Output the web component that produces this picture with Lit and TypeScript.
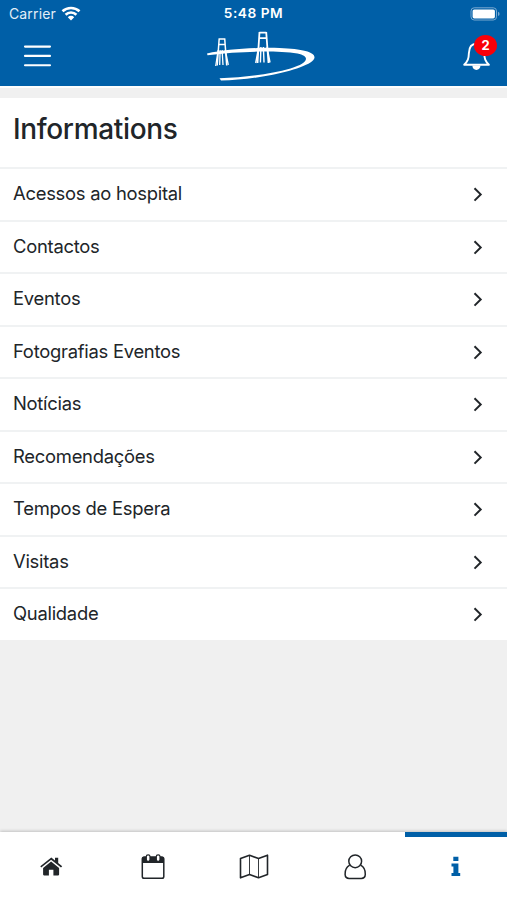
import { LitElement, html, css, svg } from "lit";
import { customElement } from "lit/decorators.js";
import { classMap } from "lit/directives/class-map.js";

const rows = [
  "Acessos ao hospital",
  "Contactos",
  "Eventos",
  "Fotografias Eventos",
  "Notícias",
  "Recomendações",
  "Tempos de Espera",
  "Visitas",
  "Qualidade",
];

const tabs = [
  {
    name: "Home",
    icon: svg`<path fill="currentColor" d="M9.3 12.2 20.3 3.5 24 6.5V3.8h3.2v5.3l4 3.1-1.2 1.4-9.9-7.8-9.9 7.8z"/><path fill="currentColor" d="m12.1 13.9 8-6.3 8 6.3v6.7q0 .8-.8.8h-4.900v-5.700h-4.500v5.700H13q-.9 0-.9-.8z"/>`,
  },
  {
    name: "Calendar",
    icon: svg`<rect x="9.300" y="3.200" width="21.500" height="21" rx="1.800" fill="none" stroke="currentColor" stroke-width="1.500"/><path fill="currentColor" d="M9 9.100V4.300Q9 2.500 11 2.500H29q2 0 2 1.800v4.800z"/><rect x="13.300" y=".8" width="3.700" height="6.500" rx="1.800" fill="#fff" stroke="currentColor" stroke-width="1.200"/><rect x="23.300" y=".8" width="3.700" height="6.500" rx="1.800" fill="#fff" stroke="currentColor" stroke-width="1.200"/>`,
  },
  {
    name: "Map",
    icon: svg`<path fill="none" stroke="currentColor" stroke-width="1.600" stroke-linejoin="round" d="m6.500 4.600 9-3.400 9 3.400 9-3.400v19.200l-9 3.400-9-3.400-9 3.400z"/><path fill="none" stroke="currentColor" stroke-width=".9" d="M15.500 1.200v19.200m9-15.800v19.200"/>`,
  },
  {
    name: "Profile",
    icon: svg`<circle cx="20.200" cy="7.300" r="6.400" fill="none" stroke="currentColor" stroke-width="1.500"/><path fill="none" stroke="currentColor" stroke-width="1.500" d="M14.700 11.200c-3.200 1.800-4.800 5.200-4.600 9.200q.2 4 4 4h12.200q3.800 0 4-4c.2-4-1.400-7.400-4.600-9.200"/>`,
  },
  {
    name: "Informations",
    icon: svg`<path fill="currentColor" d="M17.300 2.800h5.100V7h-5.100zM15.500 9.400h6.900v9.500h1.800v3.200h-8.700v-3.200h1.900v-6.300h-1.900z"/>`,
  },
];

@customElement("app-root")
export class AppRoot extends LitElement {
  static styles = css`
    :host {
      display: flex;
      flex-direction: column;
      height: 900px;
      overflow: hidden;
      background: #f0f0f0;
      color: #212529;
      font-family: Inter, "Liberation Sans", sans-serif;
    }
    svg { display: block; }
    .header {
      flex: none;
      height: 86px;
      background: #005fa7;
      color: #fff;
      border-bottom: 2px solid #fdfdfd;
    }
    .status {
      display: grid;
      grid-template-columns: 1fr 62px 1fr;
      align-items: center;
      height: 27px;
      padding: 0 7px;
      font-size: 14px;
      line-height: 27px;
    }
    .carrier { display: flex; align-items: center; gap: 5px; padding-left: 2px; letter-spacing: .14px; color: #e3eef7; }
    .time { font-size: 13.7px; font-weight: 600; letter-spacing: .5px; text-align: center; white-space: nowrap; }
    .battery { justify-self: end; }
    .nav {
      display: grid;
      grid-template-columns: 1fr 120px 1fr;
      height: 59px;
    }
    .menu { margin: 17px 0 0 23px; }
    .bell { position: relative; justify-self: end; width: 51px; }
    .badge {
      position: absolute;
      left: 18px;
      top: 8px;
      width: 23px;
      height: 21px;
      border-radius: 50%;
      background: #f90008;
      font: 700 13px/21px Inter, sans-serif;
      text-align: center;
    }
    .title {
      flex: none;
      box-sizing: border-box;
      height: 69px;
      margin: 10px 0 0;
      padding: 0 13px;
      background: #fff;
      font-size: 28px;
      font-weight: 500;
      line-height: 62px;
      letter-spacing: -.35px;
    }
    .list { flex: none; margin: 0; padding: 0 0 .4px; list-style: none; background: #fff; }
    .row {
      box-sizing: border-box;
      display: flex;
      align-items: center;
      justify-content: space-between;
      height: 52.5px;
      padding: 0 22px 0 13px;
      border-top: 2px solid #f0f2f3;
      font-size: 18.4px;
      letter-spacing: -.26px;
    }
    .label { margin-top: -2px; }
    .tabs {
      flex: none;
      display: grid;
      grid-template-columns: 102px 101px 101px 101px 1fr;
      height: 68px;
      margin-top: auto;
      background: #fff;
      box-shadow: 0 -1px 3px rgba(0, 0, 0, .2);
    }
    .tab {
      display: flex;
      justify-content: center;
      padding-top: 22px;
      box-sizing: border-box;
    }
    .active { color: #005fa7; box-shadow: inset 0 5px #005fa7; }
  `;

  render() {
    return html`
      <header class="header">
        <div class="status">
          <span class="carrier">Carrier
            <svg width="20" height="15" viewBox="0 0 20 15" fill="none" stroke="#fff" stroke-width="2.6">
              <path d="M1.5 5.3a12.4 12.4 0 0 1 17 0M4.6 8.7a7.7 7.7 0 0 1 10.8 0"/>
              <path d="m6.8 11.2 3.2 3.2 3.2-3.2a4.5 4.5 0 0 0-6.4 0" fill="#fff" stroke="none"/>
            </svg>
          </span>
          <span class="time">5:48 PM</span>
          <svg class="battery" width="30" height="14" viewBox="0 0 30 14">
            <rect x="1" y=".8" width="25.5" height="12.2" rx="3.2" fill="none" stroke="#79a9d0"/>
            <rect x="2.6" y="2.4" width="22.3" height="9" rx="1.7" fill="#fff"/>
            <path d="M28 4.8q1.6.6 1.6 2.1T28 9z" fill="#79a9d0"/>
          </svg>
        </div>
        <div class="nav">
          <svg class="menu" width="30" height="24" viewBox="0 0 30 24" stroke="#fff" stroke-width="2.1" stroke-linecap="round">
            <path d="M2 2.6h25M2 11.9h25M2 21.2h25"/>
          </svg>
          <svg width="120" height="59" viewBox="193.5 27 120 59" overflow="visible">
            <path fill="#fff" d="M206.500 53.500C226 49.400 252 47.300 279 48c23 1 35.500 4 35 9.500-.5 6.500-22 13.500-46 18-16 3-33 5-47.500 5l-1.500-2.200c26-.8 51-4.300 71-9.800 17-5 21-12 7-15-22-3-57-2.500-90 1.700z"/>
            <g fill="none" stroke="#fff">
              <path stroke-width="1.500" d="m218.700 38.500-2 27m7.500-27 2 27m-8.100-26.400h6.700m-6.900 5.400h7.300"/>
              <path stroke-width="1.300" d="m217.700 50-2.500 16m4.400-16-.4 15m2.400-15 .9 15m2.300-15 3 15"/>
              <path stroke-width="1.800" d="m259 32-2 31m8.700-31 2.300 31m-9.200-30.300h7m-7.300 5.500h7.800"/>
              <path stroke-width="1.400" d="m258.200 47-3 16m5.200-16-.5 15.500m3-15.500.6 15.500m3-15.500 3 15.500"/>
            </g>
          </svg>
          <div class="bell">
            <svg width="51" height="59" viewBox="456 27 51 59">
              <path fill="none" stroke="#fff" stroke-width="1.900" stroke-linejoin="round" d="M464.200 64.700c3.700-3.900 4.500-6 4.700-11.700.2-6 2.600-9.300 7.600-9.300s7.500 3.300 7.700 9.300c.2 5.700 1 7.800 4.700 11.700z"/>
              <path fill="#fff" d="M472.300 65.500h8.200q-.5 4.400-4.100 4.400t-4.100-4.400"/>
            </svg>
            <span class="badge">2</span>
          </div>
        </div>
      </header>
      <h1 class="title">Informations</h1>
      <ul class="list">
        ${rows.map(
          (label) => html`<li class="row">
            <span class="label">${label}</span>
            <svg width="13" height="16" viewBox="0 0 13 16" fill="none" stroke="currentColor" stroke-width="2">
              <path d="m2.500 2.200 6.200 6.200-6.200 6.200"/>
            </svg>
          </li>`
        )}
      </ul>
      <nav class="tabs">
        ${tabs.map(
          (tab, i) => html`<div class=${classMap({ tab: true, active: i === 4 })} aria-label=${tab.name}>
            <svg width="40" height="26" viewBox="0 0 40 26">${tab.icon}</svg>
          </div>`
        )}
      </nav>
    `;
  }
}
